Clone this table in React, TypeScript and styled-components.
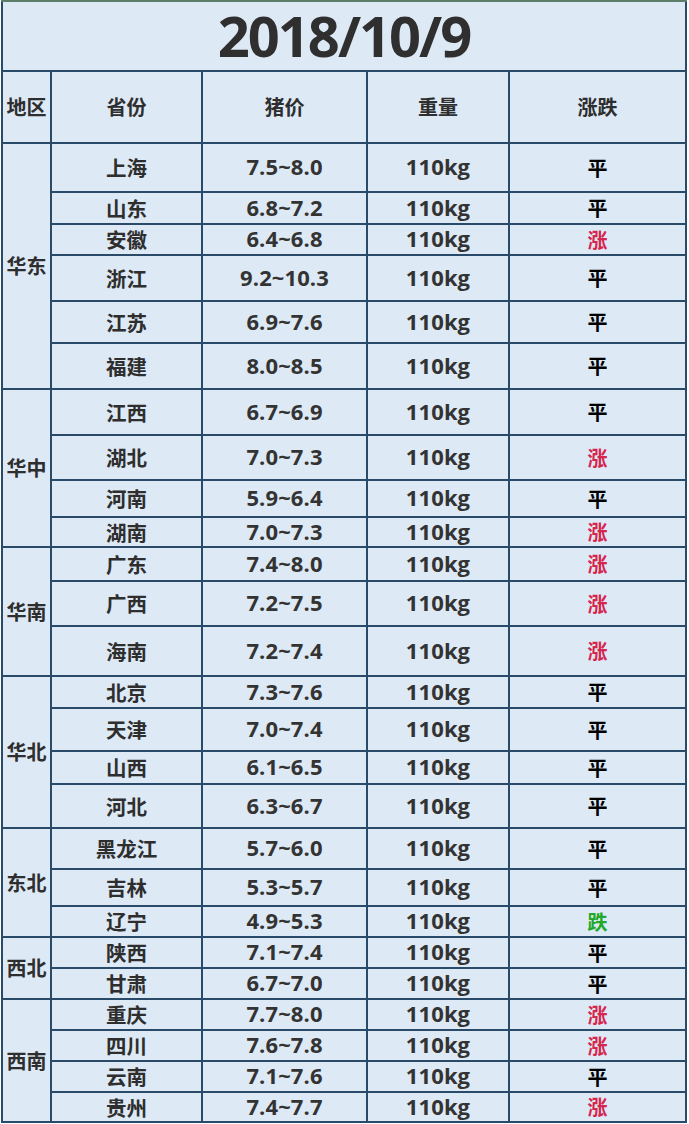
import React from "react";
import styled, { createGlobalStyle } from "styled-components";

const GlobalStyle = createGlobalStyle`
  html, body {
    margin: 0;
    padding: 0;
    background: #ffffff;
  }
  body {
    font-family: "Open Sans", "Noto Sans CJK SC", sans-serif;
  }
`;

type Trend = "平" | "涨" | "跌";
type Row = { province: string; price: string; trend: Trend; h: number };
type Region = { name: string; rows: Row[] };

const regions: Region[] = [
  {
    name: "华东",
    rows: [
      { province: "上海", price: "7.5~8.0", trend: "平", h: 47 },
      { province: "山东", price: "6.8~7.2", trend: "平", h: 30 },
      { province: "安徽", price: "6.4~6.8", trend: "涨", h: 29 },
      { province: "浙江", price: "9.2~10.3", trend: "平", h: 44 },
      { province: "江苏", price: "6.9~7.6", trend: "平", h: 40 },
      { province: "福建", price: "8.0~8.5", trend: "平", h: 44 },
    ],
  },
  {
    name: "华中",
    rows: [
      { province: "江西", price: "6.7~6.9", trend: "平", h: 44 },
      { province: "湖北", price: "7.0~7.3", trend: "涨", h: 43 },
      { province: "河南", price: "5.9~6.4", trend: "平", h: 35 },
      { province: "湖南", price: "7.0~7.3", trend: "涨", h: 28 },
    ],
  },
  {
    name: "华南",
    rows: [
      { province: "广东", price: "7.4~8.0", trend: "涨", h: 32 },
      { province: "广西", price: "7.2~7.5", trend: "涨", h: 43 },
      { province: "海南", price: "7.2~7.4", trend: "涨", h: 48 },
    ],
  },
  {
    name: "华北",
    rows: [
      { province: "北京", price: "7.3~7.6", trend: "平", h: 30 },
      { province: "天津", price: "7.0~7.4", trend: "平", h: 41 },
      { province: "山西", price: "6.1~6.5", trend: "平", h: 31 },
      { province: "河北", price: "6.3~6.7", trend: "平", h: 42 },
    ],
  },
  {
    name: "东北",
    rows: [
      { province: "黑龙江", price: "5.7~6.0", trend: "平", h: 39 },
      { province: "吉林", price: "5.3~5.7", trend: "平", h: 35 },
      { province: "辽宁", price: "4.9~5.3", trend: "跌", h: 29 },
    ],
  },
  {
    name: "西北",
    rows: [
      { province: "陕西", price: "7.1~7.4", trend: "平", h: 29 },
      { province: "甘肃", price: "6.7~7.0", trend: "平", h: 29 },
    ],
  },
  {
    name: "西南",
    rows: [
      { province: "重庆", price: "7.7~8.0", trend: "涨", h: 29 },
      { province: "四川", price: "7.6~7.8", trend: "涨", h: 29 },
      { province: "云南", price: "7.1~7.6", trend: "平", h: 29 },
      { province: "贵州", price: "7.4~7.7", trend: "涨", h: 28 },
    ],
  },
];

const allRows = regions.flatMap((r) => r.rows);
const rowTemplate = ["68px", "70px", ...allRows.map((r) => `${r.h}px`)].join(" ");

const Sheet = styled.div<{ $rows: string }>`
  margin-left: 1px;
  width: 686px;
  box-sizing: border-box;
  display: grid;
  grid-template-columns: 47px 149px 163px 140px 175px;
  grid-template-rows: ${(p) => p.$rows};
  gap: 2px;
  padding: 0 2px 2px 2px;
  border-top: 2px solid #5d7f6a;
  background: #2a4a6a;
`;

const Cell = styled.div`
  background: #dde9f5;
  display: flex;
  align-items: center;
  justify-content: center;
  color: #2e2e2e;
  font-weight: 700;
  font-size: 21px;
  line-height: 1;
  white-space: nowrap;
`;

const Title = styled(Cell)`
  grid-column: 1 / -1;
  font-size: 56px;
  letter-spacing: -2px;
  color: #2f2f2f;
  padding-bottom: 2px;
`;

const HeadCell = styled(Cell)`
  font-family: "Noto Sans CJK SC", sans-serif;
  font-size: 20px;
`;

const RegionCell = styled(Cell)<{ $span: number }>`
  grid-row: span ${(p) => p.$span};
  font-family: "Noto Sans CJK SC", sans-serif;
  font-size: 20px;
`;

const ProvinceCell = styled(Cell)`
  font-family: "Noto Sans CJK SC", sans-serif;
  font-size: 20.5px;
`;

const NumCell = styled(Cell)`
  color: #333333;
  font-size: 22px;
  letter-spacing: 0.1px;
  padding-bottom: 3px;
`;

const trendColor: Record<Trend, string> = {
  平: "#000000",
  涨: "#d7264e",
  跌: "#23a929",
};

const TrendCell = styled(Cell)<{ $trend: Trend }>`
  font-family: "Noto Sans CJK SC", sans-serif;
  font-size: 20px;
  color: ${(p) => trendColor[p.$trend]};
`;

export default function App() {
  return (
    <>
      <GlobalStyle />
      <Sheet $rows={rowTemplate}>
        <Title>2018/10/9</Title>
        <HeadCell>地区</HeadCell>
        <HeadCell>省份</HeadCell>
        <HeadCell>猪价</HeadCell>
        <HeadCell>重量</HeadCell>
        <HeadCell>涨跌</HeadCell>
        {regions.map((region) =>
          region.rows.map((row, i) => (
            <React.Fragment key={row.province}>
              {i === 0 && (
                <RegionCell $span={region.rows.length}>{region.name}</RegionCell>
              )}
              <ProvinceCell>{row.province}</ProvinceCell>
              <NumCell>{row.price}</NumCell>
              <NumCell>110kg</NumCell>
              <TrendCell $trend={row.trend}>{row.trend}</TrendCell>
            </React.Fragment>
          ))
        )}
      </Sheet>
    </>
  );
}
